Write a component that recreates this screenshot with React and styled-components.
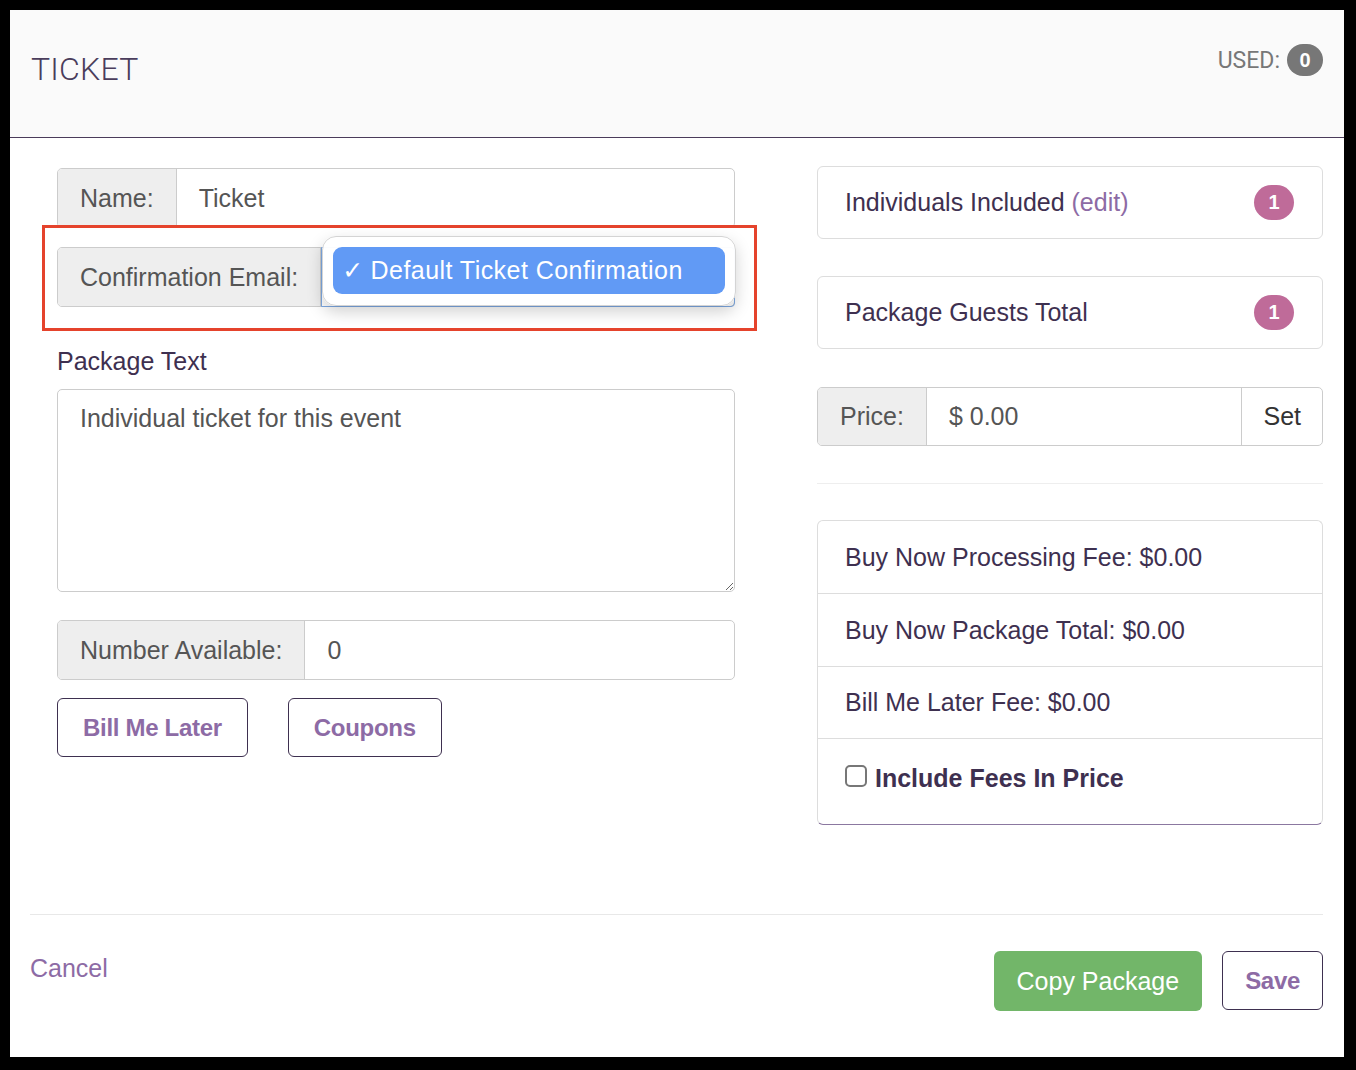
import React from "react";
import styled, { createGlobalStyle } from "styled-components";

const GlobalStyle = createGlobalStyle`
  html, body {
    margin: 0;
    padding: 0;
    background: #000;
  }
  body {
    font-family: "Liberation Sans", Arial, sans-serif;
  }
  * {
    box-sizing: border-box;
  }
`;

const INK = "#3e3050";
const PURPLE = "#8d6ba5";

const Modal = styled.div`
  width: 1334px;
  height: 1047px;
  margin: 10px 0 0 10px;
  background: #fff;
  display: flex;
  flex-direction: column;
`;

// header strip with title and usage counter
const Header = styled.div`
  height: 128px;
  background: #fafafa;
  border-bottom: 1px solid #4a3b5a;
  display: flex;
  justify-content: space-between;
  align-items: flex-start;
  padding: 0 21px 0 21px;
`;
const Title = styled.h1`
  margin: 40px 0 0;
  font-family: Roboto, "Liberation Sans", sans-serif;
  font-weight: 300;
  font-size: 32px;
  line-height: 38px;
  color: #4a3d5c;
  letter-spacing: 0.2px;
`;
const Used = styled.div`
  margin-top: 34px;
  display: flex;
  align-items: center;
  gap: 7px;
  font-family: Roboto, "Liberation Sans", sans-serif;
  font-size: 23px;
  color: #777;
`;
const Pill = styled.span`
  display: inline-flex;
  align-items: center;
  justify-content: center;
  min-width: ${(p) => p.$w || 36}px;
  height: ${(p) => p.$h || 32}px;
  border-radius: 20px;
  background: ${(p) => p.$bg};
  color: #fff;
  font-family: "Liberation Sans", Arial, sans-serif;
  font-weight: bold;
  font-size: 20px;
`;

const Body = styled.div`
  height: 776px;
  display: flex;
  gap: 82px;
  padding: 28px 21px 0 47px;
`;
const LeftCol = styled.div`
  width: 678px;
  padding-top: 2px;
  display: flex;
  flex-direction: column;
`;
const RightCol = styled.div`
  width: 506px;
  display: flex;
  flex-direction: column;
`;

// bootstrap-ish input group
const Group = styled.div`
  position: relative;
  display: flex;
  height: ${(p) => p.$h || 60}px;
  margin-top: ${(p) => p.$mt || 0}px;
  border: 1px solid #ccc;
  border-radius: 5px;
  font-size: 25px;
`;
const Addon = styled.div`
  display: flex;
  align-items: center;
  padding: 0 22px;
  background: #eee;
  color: #555;
  border-right: 1px solid #ccc;
  border-radius: 4px 0 0 4px;
  white-space: nowrap;
`;
const Field = styled.div`
  flex: 1;
  display: flex;
  align-items: center;
  padding: 0 22px;
  color: #555;
`;
const SetButton = styled.div`
  display: flex;
  align-items: center;
  padding: 0 21px;
  border-left: 1px solid #ccc;
  color: #333;
`;
const SelectBox = styled.div`
  position: relative;
  flex: 1;
  margin: -1px -1px -1px 0;
  border: 1px solid #7ea9e2;
  border-radius: 0 4px 4px 0;
`;

// native-looking open menu drawn over the select
const Menu = styled.div`
  position: absolute;
  top: -12px;
  left: 0;
  width: 414px;
  height: 70px;
  padding: 10px 10px;
  background: rgba(255, 255, 255, 0.97);
  border: 1px solid #d4d4d4;
  border-radius: 14px;
  box-shadow: 0 6px 16px rgba(0, 0, 0, 0.18);
  z-index: 2;
`;
const MenuItem = styled.div`
  height: 47px;
  border-radius: 9px;
  background: #619af5;
  color: #fff;
  display: flex;
  align-items: center;
  padding-left: 9px;
  font-size: 25px;
  letter-spacing: 0.45px;
`;
const Check = styled.span`
  font-family: "DejaVu Sans", sans-serif;
  font-weight: bold;
  font-size: 25px;
  margin-right: 7px;
`;
const Highlight = styled.div`
  position: absolute;
  top: -23px;
  left: -16px;
  right: -23px;
  bottom: -25px;
  border: 3px solid #e5432c;
  pointer-events: none;
`;

const FieldLabel = styled.div`
  margin-top: 39px;
  line-height: 30px;
  font-size: 25px;
  color: ${INK};
`;
const TextArea = styled.textarea`
  margin-top: 13px;
  height: 203px;
  width: 100%;
  padding: 13px 22px;
  border: 1px solid #ccc;
  border-radius: 5px;
  font-family: "Liberation Sans", Arial, sans-serif;
  font-size: 25px;
  line-height: 30px;
  color: #555;
  outline: none;
`;

const ButtonRow = styled.div`
  display: flex;
  gap: ${(p) => p.$gap || 40}px;
  margin-top: ${(p) => p.$mt || 0}px;
`;
const OutlineButton = styled.button`
  height: 59px;
  padding: 0 ${(p) => p.$pad || 25}px;
  background: #fff;
  border: 1px solid ${INK};
  border-radius: 6px;
  font-family: "Liberation Sans", Arial, sans-serif;
  font-weight: bold;
  font-size: 24px;
  color: ${PURPLE};
  letter-spacing: -0.3px;
`;
const SolidButton = styled.button`
  height: 60px;
  padding: 0 23px;
  background: #72b669;
  border: none;
  border-radius: 6px;
  font-family: "Liberation Sans", Arial, sans-serif;
  font-size: 25px;
  color: #fff;
`;

const InfoBox = styled.div`
  height: 73px;
  margin-top: ${(p) => p.$mt || 0}px;
  display: flex;
  align-items: center;
  justify-content: space-between;
  padding: 0 28px 0 27px;
  border: 1px solid #ddd;
  border-radius: 6px;
  font-size: 25px;
  color: ${INK};
`;
const EditLink = styled.span`
  color: ${PURPLE};
`;
const Rule = styled.hr`
  margin: 37px 0 0;
  border: none;
  border-top: 1px solid #eee;
`;
const List = styled.div`
  margin-top: 36px;
  border: 1px solid #ddd;
  border-bottom-color: #8b78a0;
  border-radius: 6px;
`;
const ListRow = styled.div`
  height: ${(p) => p.$h || 72}px;
  display: flex;
  align-items: ${(p) => (p.$top ? "flex-start" : "center")};
  padding: ${(p) => (p.$top ? "25px 28px 0 27px" : "0 28px 0 27px")};
  border-top: ${(p) => (p.$first ? "none" : "1px solid #ddd")};
  font-size: 25px;
  color: ${INK};
`;
const Checkbox = styled.input`
  appearance: none;
  width: 22px;
  height: 22px;
  margin: 1px 8px 0 0;
  border: 2px solid #777;
  border-radius: 5px;
  background: #fff;
`;
const Strong = styled.label`
  font-weight: bold;
`;

const Footer = styled.div`
  flex: 1;
  margin: 0 21px 0 20px;
  padding-top: 36px;
  border-top: 1px solid #e8e8e8;
  display: flex;
  justify-content: space-between;
  align-items: flex-start;
`;
const Cancel = styled.a`
  margin-top: 2px;
  line-height: 30px;
  font-size: 25px;
  color: ${PURPLE};
  text-decoration: none;
`;

export default function App() {
  return (
    <>
      <GlobalStyle />
      <Modal>
        <Header>
          <Title>TICKET</Title>
          <Used>
            USED: <Pill $bg="#777">0</Pill>
          </Used>
        </Header>

        <Body>
          <LeftCol>
            <Group>
              <Addon>Name:</Addon>
              <Field>Ticket</Field>
            </Group>

            <Group $mt={19}>
              <Addon>Confirmation Email:</Addon>
              <SelectBox>
                <Menu>
                  <MenuItem>
                    <Check>✓</Check>Default Ticket Confirmation
                  </MenuItem>
                </Menu>
              </SelectBox>
              <Highlight />
            </Group>

            <FieldLabel>Package Text</FieldLabel>
            <TextArea readOnly defaultValue="Individual ticket for this event" />

            <Group $mt={28}>
              <Addon>Number Available:</Addon>
              <Field>0</Field>
            </Group>

            <ButtonRow $mt={18}>
              <OutlineButton>Bill Me Later</OutlineButton>
              <OutlineButton>Coupons</OutlineButton>
            </ButtonRow>
          </LeftCol>

          <RightCol>
            <InfoBox>
              <span>
                Individuals Included <EditLink>(edit)</EditLink>
              </span>
              <Pill $bg="#bf6b99" $w={40} $h={35}>1</Pill>
            </InfoBox>
            <InfoBox $mt={37}>
              <span>Package Guests Total</span>
              <Pill $bg="#bf6b99" $w={40} $h={35}>1</Pill>
            </InfoBox>

            <Group $mt={38} $h={59}>
              <Addon>Price:</Addon>
              <Field>$ 0.00</Field>
              <SetButton>Set</SetButton>
            </Group>

            <Rule />

            <List>
              <ListRow $first>Buy Now Processing Fee: $0.00</ListRow>
              <ListRow $h={73}>Buy Now Package Total: $0.00</ListRow>
              <ListRow>Bill Me Later Fee: $0.00</ListRow>
              <ListRow $h={86} $top>
                <Checkbox type="checkbox" id="fees" />
                <Strong htmlFor="fees">Include Fees In Price</Strong>
              </ListRow>
            </List>
          </RightCol>
        </Body>

        <Footer>
          <Cancel href="#">Cancel</Cancel>
          <ButtonRow $gap={20}>
            <SolidButton>Copy Package</SolidButton>
            <OutlineButton $pad={22}>Save</OutlineButton>
          </ButtonRow>
        </Footer>
      </Modal>
    </>
  );
}
